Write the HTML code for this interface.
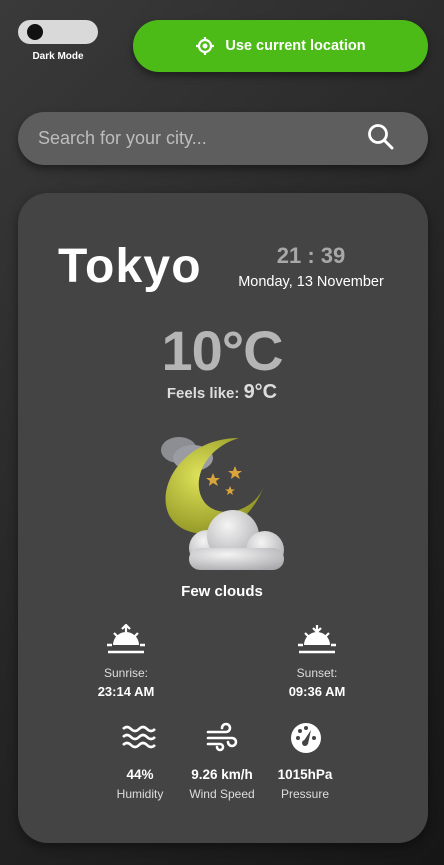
<!DOCTYPE html>
<html><head><style>
*{margin:0;padding:0;box-sizing:border-box}
body{width:444px;height:865px;overflow:hidden;background:linear-gradient(135deg,#3a3a3a 0%,#262626 50%,#161616 100%);font-family:"Liberation Sans",sans-serif;color:#fff;position:relative}
.abs{position:absolute}
.tog{left:18px;top:20px;width:80px;height:24px;border-radius:12px;background:#d9d9d9}
.tog i{position:absolute;left:9px;top:4px;width:16px;height:16px;border-radius:50%;background:#111}
.dm{left:18px;top:51px;width:80px;text-align:center;font-size:10px;font-weight:bold}
.loc{left:133px;top:20px;width:295px;height:52px;border-radius:26px;background:#4cbb17;box-shadow:0 4px 8px rgba(0,0,0,.4);display:flex;align-items:center;justify-content:center;font-weight:bold;font-size:14.5px;gap:10px}
.search{left:18px;top:112px;width:410px;height:53px;border-radius:27px;background:#5d5e5d;box-shadow:0 4px 8px rgba(0,0,0,.4)}
.search span{position:absolute;left:20px;top:16px;font-size:18px;color:#bdbdbd}
.card{left:18px;top:193px;width:410px;height:650px;border-radius:30px;background:#444;box-shadow:0 4px 10px rgba(0,0,0,.4)}
.c{text-align:center}
</style></head><body>
<div class="abs tog"><i></i></div>
<div class="abs dm">Dark Mode</div>
<div class="abs loc"><svg width="20" height="20" viewBox="0 0 20 20"><circle cx="10" cy="10" r="6" fill="none" stroke="#fff" stroke-width="2.2"/><circle cx="10" cy="10" r="2.5" fill="#fff"/><path d="M10 1v4M10 15v4M1 10h4M15 10h4" stroke="#fff" stroke-width="2.2"/></svg>Use current location</div>
<div class="abs search"><span>Search for your city...</span>
<svg class="abs" style="left:348px;top:10px" width="30" height="30" viewBox="0 0 30 30"><circle cx="12" cy="12" r="8.5" fill="none" stroke="#fff" stroke-width="2.8"/><path d="M18 18l8 8" stroke="#fff" stroke-width="3" stroke-linecap="round"/></svg></div>
<div class="abs card"></div>
<div class="abs" style="left:58px;top:239px;font-size:48px;font-weight:bold;letter-spacing:1.2px">Tokyo</div>
<div class="abs c" style="left:228px;top:243px;width:166px;font-size:22px;font-weight:bold;color:#a8a8a8">21 : 39</div>
<div class="abs c" style="left:228px;top:274px;width:166px;font-size:14.5px">Monday, 13 November</div>
<div class="abs c" style="left:0;top:318px;width:444px;font-size:56px;font-weight:bold;color:#b5b5b5;letter-spacing:-1px">10°C</div>
<div class="abs c" style="left:0;top:381px;width:444px;font-size:15px;font-weight:bold;color:#ddd">Feels like: <span style="font-size:20px">9°C</span></div>
<svg class="abs" style="left:155px;top:430px" width="135" height="145" viewBox="0 0 135 145">
<defs><radialGradient id="m" cx="35%" cy="40%" r="70%"><stop offset="0" stop-color="#dfe35a"/><stop offset="1" stop-color="#8a8f20"/></radialGradient>
<radialGradient id="cl" cx="40%" cy="30%" r="80%"><stop offset="0" stop-color="#f4f4f4"/><stop offset="1" stop-color="#a9a9ad"/></radialGradient></defs>
<ellipse cx="24" cy="20" rx="18" ry="13" fill="#8c8e94"/>
<ellipse cx="38" cy="28" rx="20" ry="13" fill="#9a9ca2"/>
<path d="M84 8 C30 8 0 55 14 85 C30 115 90 112 110 53 C100 85 60 90 48 70 C36 50 50 18 84 8Z" fill="url(#m)"/>
<g fill="#d9a53a"><path d="M80 36l2 5 5 0-4 3 2 5-5-3-4 3 1-5-4-3 5 0z"/><path d="M58 43l2 5 5 0-4 3 2 5-5-3-4 3 1-5-4-3 5 0z"/><path d="M75 56l1.5 3.5 3.5 0-3 2 1 3.5-3-2-3 2 1-3.5-3-2 3.5 0z"/></g>
<g fill="url(#cl)"><circle cx="52" cy="118" r="18"/><circle cx="78" cy="106" r="26"/><circle cx="110" cy="120" r="19"/><rect x="34" y="118" width="95" height="22" rx="11"/></g>
</svg>
<div class="abs c" style="left:0;top:583px;width:444px;font-size:15px;font-weight:bold">Few clouds</div>
<svg class="abs" style="left:105px;top:624px" width="42" height="30" viewBox="0 0 42 30"><path d="M8 21a13 13 0 0 1 26 0z" fill="#fff"/><path d="M2 21h5M35 21h5M3 28h36" stroke="#fff" stroke-width="2.5"/><path d="M21 1v7M17 5l4-4 4 4M9 9l3 3M33 9l-3 3" stroke="#fff" stroke-width="2.2" fill="none"/></svg>
<svg class="abs" style="left:296px;top:624px" width="42" height="30" viewBox="0 0 42 30"><path d="M8 21a13 13 0 0 1 26 0z" fill="#fff"/><path d="M2 21h5M35 21h5M3 28h36" stroke="#fff" stroke-width="2.5"/><path d="M21 1v7M17 4l4 4 4-4M9 9l3 3M33 9l-3 3" stroke="#fff" stroke-width="2.2" fill="none"/></svg>
<div class="abs c" style="left:86px;top:666px;width:80px;font-size:12px;color:#ddd">Sunrise:</div>
<div class="abs c" style="left:86px;top:684px;width:80px;font-size:13px;font-weight:bold">23:14 AM</div>
<div class="abs c" style="left:277px;top:666px;width:80px;font-size:12px;color:#ddd">Sunset:</div>
<div class="abs c" style="left:277px;top:684px;width:80px;font-size:13px;font-weight:bold">09:36 AM</div>
<svg class="abs" style="left:122px;top:724px" width="36" height="26" viewBox="0 0 36 26" fill="none" stroke="#fff" stroke-width="2.6"><path d="M1 5q4-4 8 0t8 0 8 0 8 0M1 13q4-4 8 0t8 0 8 0 8 0M1 21q4-4 8 0t8 0 8 0 8 0"/></svg>
<svg class="abs" style="left:206px;top:722px" width="32" height="30" viewBox="0 0 32 30" fill="none" stroke="#fff" stroke-width="2.6" stroke-linecap="round"><path d="M2 10h18a4 4 0 1 0-4-4M2 16h24a4 4 0 1 1-4 4M2 22h12a3 3 0 1 1-3 3"/></svg>
<svg class="abs" style="left:290px;top:722px" width="32" height="32" viewBox="0 0 32 32"><circle cx="16" cy="16" r="15" fill="#fff"/><circle cx="8" cy="16" r="2" fill="#444"/><circle cx="10" cy="9" r="2" fill="#444"/><circle cx="16" cy="6" r="2" fill="#444"/><circle cx="24" cy="16" r="2" fill="#444"/><path d="M13 20l8-12 -3 14z" fill="#444"/><circle cx="15" cy="21" r="3" fill="#444"/></svg>
<div class="abs c" style="left:100px;top:767px;width:80px;font-size:13.5px;font-weight:bold">44%</div>
<div class="abs c" style="left:100px;top:787px;width:80px;font-size:12px;color:#ddd">Humidity</div>
<div class="abs c" style="left:177px;top:767px;width:90px;font-size:13.5px;font-weight:bold">9.26 km/h</div>
<div class="abs c" style="left:177px;top:787px;width:90px;font-size:12px;color:#ddd">Wind Speed</div>
<div class="abs c" style="left:265px;top:767px;width:80px;font-size:13.5px;font-weight:bold">1015hPa</div>
<div class="abs c" style="left:265px;top:787px;width:80px;font-size:12px;color:#ddd">Pressure</div>
</body></html>
